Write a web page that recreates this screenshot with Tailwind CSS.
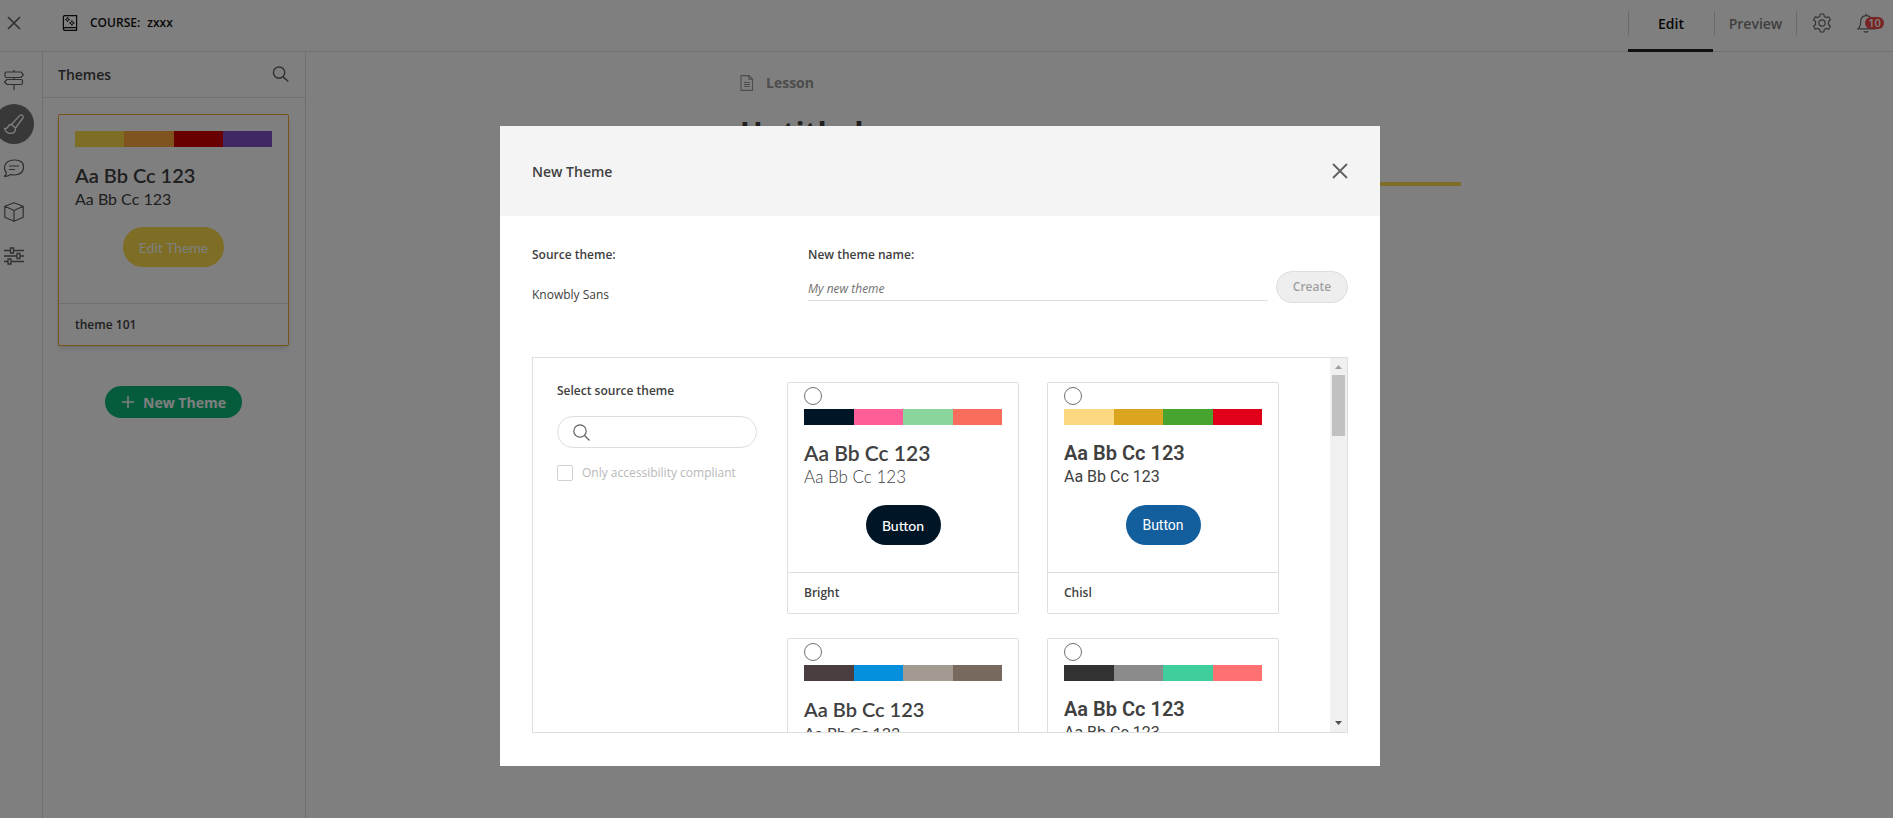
<!DOCTYPE html>
<html lang="en">
<head>
<meta charset="utf-8">
<title>Course: zxxx</title>
<script src="https://cdn.jsdelivr.net/npm/@tailwindcss/browser@4"></script>
</head>
<body class="h-screen overflow-hidden bg-white font-['Open_Sans',sans-serif] text-[#404040]">
<div class="flex h-full flex-col">
  <header class="flex h-[52px] shrink-0 items-center border-b border-[#dedede] pr-[9px] pb-[5px] pl-[6px]">
    <button aria-label="Close course" class="flex size-4 items-center justify-center text-[#606060]">
      <svg class="size-4" viewBox="0 0 16 16" fill="none" stroke="currentColor" stroke-width="1.6"><path d="M2 2l12 12M14 2L2 14"/></svg>
    </button>
    <svg class="ml-[40px] size-4" viewBox="0 0 16 16" fill="none" stroke="#101010" stroke-width="1.2"><path d="M14.600 12.600V.6H2.800Q1.400.6 1.400 2V14Q1.400 15.400 2.800 15.400H14.600V12.600H3Q1.400 12.600 1.400 14"/><path d="M5.500 2.300l.6 1.700 1.700.6-1.700.6-.6 1.700-.6-1.700-1.700-.6 1.700-.6zM9.900 5.600l.7 1.700 1.700.7-1.700.7-.7 1.700-.7-1.700-1.700-.7 1.700-.7z" stroke-width=".9"/></svg>
    <h1 class="ml-3 flex gap-[7px] text-[12px] font-semibold text-[#101010]"><span>COURSE:</span><span>zxxx</span></h1>
    <nav class="ml-auto flex items-center">
      <a href="#edit" class="relative flex h-6 w-[85px] items-center justify-center border-l border-[#d4d4d4] text-[14px] font-semibold text-[#101010]">Edit<span class="absolute top-[38px] -left-px h-[3px] w-[85px] bg-[#222]"></span></a>
      <a href="#preview" class="ml-px flex h-6 w-[82px] items-center justify-center border-l border-[#d4d4d4] text-[14px] font-semibold text-[#808080]">Preview</a>
      <button aria-label="Settings" class="flex h-6 w-[51px] items-center justify-center border-l border-[#d4d4d4]">
        <svg class="size-5" viewBox="0 0 20 20" fill="none" stroke="#6a6a6a" stroke-width="1.200" stroke-linejoin="round"><circle cx="10" cy="10" r="3.200"/><path d="M8.200 1h3.600l.5 2.500 1.900 1.100 2.400-.9 1.800 3.100-1.900 1.700v3l1.900 1.700-1.800 3.100-2.400-.9-1.900 1.100-.5 2.500H8.200l-.5-2.500-1.900-1.100-2.400.9-1.800-3.100 1.900-1.700v-3L1.600 6.800l1.800-3.100 2.400.9 1.900-1.100z"/></svg>
      </button>
      <button aria-label="Notifications, 10 unread" class="relative ml-[10px] h-5 w-[27px]">
        <svg class="size-5" viewBox="0 0 20 20" fill="none" stroke="#6a6a6a" stroke-width="1.200"><path d="M1 15.800Q3.500 14 3.700 8.500 4 3 9 2.600T14.400 8.500Q14.600 14 17.200 15.800zM9 2.600V.6M6.800 18.300Q9 20 11.200 18.300"/></svg>
        <span class="absolute top-1 right-0 flex h-3 w-[19px] items-center justify-center rounded-full bg-[#f04848] text-[11px] font-semibold text-white">10</span>
      </button>
    </nav>
  </header>
  <div class="flex min-h-0 flex-1">
    <nav class="flex w-[43px] shrink-0 flex-col items-start gap-6 border-r border-[#dedede] pt-[18px] pl-1 text-[#606060]">
      <button aria-label="Outline" class="size-5"><svg class="size-5" viewBox="0 0 20 20" fill="none" stroke="currentColor" stroke-width="1.200" stroke-linejoin="round"><path d="M10 0v2M10 7.500v2M10 14.500v5.500M2.500 2H17l2.300 2.700L17 7.500H2.500Q1 7.500 1 6V3.500Q1 2 2.500 2zM17 9.500H3L.6 12 3 14.500h14q1.500 0 1.500-1.500v-2q0-1.500-1.500-1.500z"/></svg></button>
      <button aria-label="Themes" class="-my-[10px] -ml-[10px] flex size-10 items-center justify-center rounded-full bg-[#707070] text-white"><svg class="size-5" viewBox="0 0 20 20" fill="none" stroke="currentColor" stroke-width="1.300" stroke-linejoin="round"><path d="M7.500 10.500L15.800 1.400q1.700-1.300 3 .3.900 1.200.1 2.300L11.500 14zM7.500 10.500q-2.500-.2-3.400 2-.8 2.500-3.600 2 1.300 4.800 6 5 5.300-.3 5-5.500z"/></svg></button>
      <button aria-label="Comments" class="size-5"><svg class="size-5" viewBox="0 0 20 20" fill="none" stroke="currentColor" stroke-width="1.200" stroke-linejoin="round"><path d="M.5 18.300Q2.500 16.500 2.300 14.500 .5 12.500.5 10 .8 2.300 10.300 2T19.500 9.500Q19.300 16.500 10.500 17 8.500 17 6.500 16.500 3.800 18.500.5 18.300zM5 8h10M5 11.500h6"/></svg></button>
      <button aria-label="Assets" class="size-5"><svg class="size-5" viewBox="0 0 20 20" fill="none" stroke="currentColor" stroke-width="1.200" stroke-linejoin="round"><path d="M10 .8l9.200 3.500v11L10 19.300.8 15.300v-11zM.8 4.300L10 8.500l9.200-4.200M10 8.500v10.800"/></svg></button>
      <button aria-label="Options" class="size-5"><svg class="size-5" viewBox="0 0 20 20" fill="none" stroke="currentColor" stroke-width="1.300"><path d="M0 4.500h6.500M9.500 4.500H20M0 10h13M16 10h4M0 15.500h4M7 15.500h13M6.500 2h3v5h-3zM13 7.500h3v5h-3zM4 13h3v5H4z"/></svg></button>
    </nav>
    <aside class="w-[263px] shrink-0 border-r border-[#dedede]">
      <div class="flex h-[46px] items-center justify-between border-b border-[#dedede] pr-4 pl-[15px]">
        <h2 class="text-[14px] font-semibold">Themes</h2>
        <button aria-label="Search themes" class="size-[17px]"><svg class="size-[17px]" viewBox="0 0 18 18" fill="none" stroke="#606060" stroke-width="1.500"><circle cx="7.500" cy="7" r="6"/><path d="M11.800 11.500l5.500 5"/></svg></button>
      </div>
      <div class="flex flex-col items-center pt-4 pr-4 pl-[15px]">
        <article class="flex h-[232px] w-full flex-col rounded-[2px] border border-[#eca82c] shadow-md">
          <div class="flex flex-1 flex-col px-4 pt-4 font-['Lato',sans-serif]">
            <div class="grid h-4 grid-cols-4"><span class="bg-[#fada4a]"></span><span class="bg-[#ffa63c]"></span><span class="bg-[#d00000]"></span><span class="bg-[#8050c8]"></span></div>
            <p class="mt-4 text-[20px] leading-6 font-semibold">Aa Bb Cc 123</p>
            <p class="text-[16px] leading-6">Aa Bb Cc 123</p>
            <button class="mt-4 h-10 self-center rounded-full bg-[#fada4a] px-4 text-[14px] text-white">Edit Theme</button>
          </div>
          <h3 class="flex h-[42px] items-center border-t border-[#dedede] px-4 text-[12px] font-semibold">theme 101</h3>
        </article>
        <button class="mt-10 flex h-8 items-center gap-2 rounded-full bg-[#0bb97b] px-4 text-[14px] font-bold text-white">
          <svg class="size-[14px]" viewBox="0 0 14 14" fill="none" stroke="currentColor" stroke-width="1.500"><path d="M7 1v12M1 7h12"/></svg>New Theme</button>
      </div>
    </aside>
    <main class="flex min-w-0 flex-1 justify-center pl-[2px]">
      <section class="w-[721px] pt-[22px]">
        <div class="flex h-[17px] items-center gap-3 text-[14px] font-bold text-[#989898]"><svg class="h-4 w-[14px]" viewBox="0 0 14 16" fill="none" stroke="currentColor" stroke-width="1.100"><path d="M1 .600h8L12.500 4v11.400H1zM8.800.600V4.200h3.700M4 7.500h6M4 9.500h6M4 11.500h6"/></svg>Lesson</div>
        <h2 class="mt-5 h-[75px] border-b-4 border-[#fada4a] text-[30px] leading-[44px] font-bold">Untitled</h2>
      </section>
    </main>
  </div>
</div>

<div class="fixed inset-0 flex items-start justify-center bg-black/50 pt-[126px] pr-[13px]">
  <div role="dialog" aria-labelledby="dialog-title" class="w-[880px] bg-white">
    <div class="flex h-[90px] items-center justify-between bg-[#f4f4f4] px-8">
      <h2 id="dialog-title" class="text-[14px] font-semibold">New Theme</h2>
      <button aria-label="Close" class="size-4 text-[#606060]"><svg class="size-4" viewBox="0 0 16 16" fill="none" stroke="currentColor" stroke-width="1.800"><path d="M1 1l14 14M15 1L1 15"/></svg></button>
    </div>
    <div class="px-8 pt-[31px] pb-[33px]">
      <form class="flex h-14 items-end">
        <div class="flex w-[276px] flex-col gap-6 text-[12px] leading-4"><span class="font-semibold">Source theme:</span><span>Knowbly Sans</span></div>
        <div class="flex flex-1 flex-col gap-[14px] self-start text-[12px] leading-4">
          <label for="theme-name" class="font-semibold">New theme name:</label>
          <input id="theme-name" type="text" placeholder="My new theme" class="h-6 w-full border-b border-[#dedede] placeholder:text-[#707070] placeholder:italic">
        </div>
        <button type="submit" disabled class="ml-2 h-8 w-[72px] rounded-full border border-[#dedede] bg-[#eee] text-[12px] font-semibold text-[#a0a0a0]">Create</button>
      </form>
      <div class="mt-[54px] flex h-[376px] border border-[#dedede]">
        <div class="w-[254px] shrink-0 pt-[25px] pl-6">
          <label for="theme-search" class="block text-[12px] leading-4 font-semibold">Select source theme</label>
          <div class="mt-[17px] flex h-8 w-[200px] items-center gap-2 rounded-full border border-[#dedede] px-[15px]">
            <svg class="size-[17px] shrink-0" viewBox="0 0 17 17" fill="none" stroke="#606060" stroke-width="1.200"><circle cx="7" cy="7" r="6.200"/><path d="M11.500 11.500l5 5"/></svg>
            <input id="theme-search" type="text" class="w-full min-w-0 text-[12px] outline-none">
          </div>
          <label class="mt-4 flex items-center gap-[9px] text-[12px] text-[#b8b8b8]"><input type="checkbox" disabled class="size-4 appearance-none rounded-[2px] border border-[#d0d0d0]">Only accessibility compliant</label>
        </div>
        <div class="grid min-w-0 flex-1 auto-rows-[232px] grid-cols-[232px_232px] gap-x-7 gap-y-6 overflow-hidden pt-6">
          <article class="flex flex-col rounded-[2px] border border-[#dedede]">
            <div class="flex flex-1 flex-col px-4 pt-1 font-['Lato',sans-serif]">
              <input type="radio" name="source" aria-label="Bright" class="size-[18px] appearance-none rounded-full border border-[#707070]">
              <div class="mt-1 grid h-4 grid-cols-4"><span class="bg-[#001627]"></span><span class="bg-[#ff5e98]"></span><span class="bg-[#8ad59b]"></span><span class="bg-[#f86d5e]"></span></div>
              <p class="mt-4 text-[21px] leading-6 font-semibold">Aa Bb Cc 123</p>
              <p class="text-[17px] leading-6 font-light">Aa Bb Cc 123</p>
              <button class="mt-4 h-10 w-[75px] self-center rounded-full bg-[#001627] text-[14px] font-medium text-white">Button</button>
            </div>
            <h3 class="flex h-[41px] items-center border-t border-[#dedede] px-4 text-[12px] font-semibold">Bright</h3>
          </article>
          <article class="flex flex-col rounded-[2px] border border-[#dedede]">
            <div class="flex flex-1 flex-col px-4 pt-1 font-['Roboto',sans-serif]">
              <input type="radio" name="source" aria-label="Chisl" class="size-[18px] appearance-none rounded-full border border-[#707070]">
              <div class="mt-1 grid h-4 grid-cols-4"><span class="bg-[#fcd980]"></span><span class="bg-[#dca520]"></span><span class="bg-[#48a430]"></span><span class="bg-[#e1001a]"></span></div>
              <p class="mt-4 text-[20px] leading-6 font-semibold">Aa Bb Cc 123</p>
              <p class="text-[16px] leading-6">Aa Bb Cc 123</p>
              <button class="mt-4 h-10 w-[75px] self-center rounded-full bg-[#135e9c] text-[14px] text-white">Button</button>
            </div>
            <h3 class="flex h-[41px] items-center border-t border-[#dedede] px-4 text-[12px] font-semibold">Chisl</h3>
          </article>
          <article class="flex flex-col rounded-[2px] border border-[#dedede]">
            <div class="flex flex-1 flex-col px-4 pt-1 font-['Lato',sans-serif]">
              <input type="radio" name="source" aria-label="Third theme" class="size-[18px] appearance-none rounded-full border border-[#707070]">
              <div class="mt-1 grid h-4 grid-cols-4"><span class="bg-[#493d3f]"></span><span class="bg-[#068fdc]"></span><span class="bg-[#a39a91]"></span><span class="bg-[#77695d]"></span></div>
              <p class="mt-4 text-[20px] leading-6 font-semibold">Aa Bb Cc 123</p>
              <p class="text-[16px] leading-6">Aa Bb Cc 123</p>
            </div>
          </article>
          <article class="flex flex-col rounded-[2px] border border-[#dedede]">
            <div class="flex flex-1 flex-col px-4 pt-1 font-['Roboto',sans-serif]">
              <input type="radio" name="source" aria-label="Fourth theme" class="size-[18px] appearance-none rounded-full border border-[#707070]">
              <div class="mt-1 grid h-4 grid-cols-4"><span class="bg-[#323232]"></span><span class="bg-[#8b8b8b]"></span><span class="bg-[#41ce9d]"></span><span class="bg-[#ff7070]"></span></div>
              <p class="mt-4 text-[20px] leading-6 font-semibold">Aa Bb Cc 123</p>
              <p class="text-[16px] leading-6">Aa Bb Cc 123</p>
            </div>
          </article>
        </div>
        <div class="flex w-[17px] shrink-0 flex-col items-center bg-[#f0f0f0]" aria-hidden="true">
          <svg class="h-[17px] w-[17px]" viewBox="0 0 17 17"><path d="M5 11l3.500-4 3.500 4z" fill="#a0a0a0"/></svg>
          <div class="h-[61px] w-[13px] bg-[#c1c1c1]"></div>
          <svg class="mt-auto h-[17px] w-[17px]" viewBox="0 0 17 17"><path d="M5 6h7l-3.500 4z" fill="#505050"/></svg>
        </div>
      </div>
    </div>
  </div>
</div>
</body>
</html>
